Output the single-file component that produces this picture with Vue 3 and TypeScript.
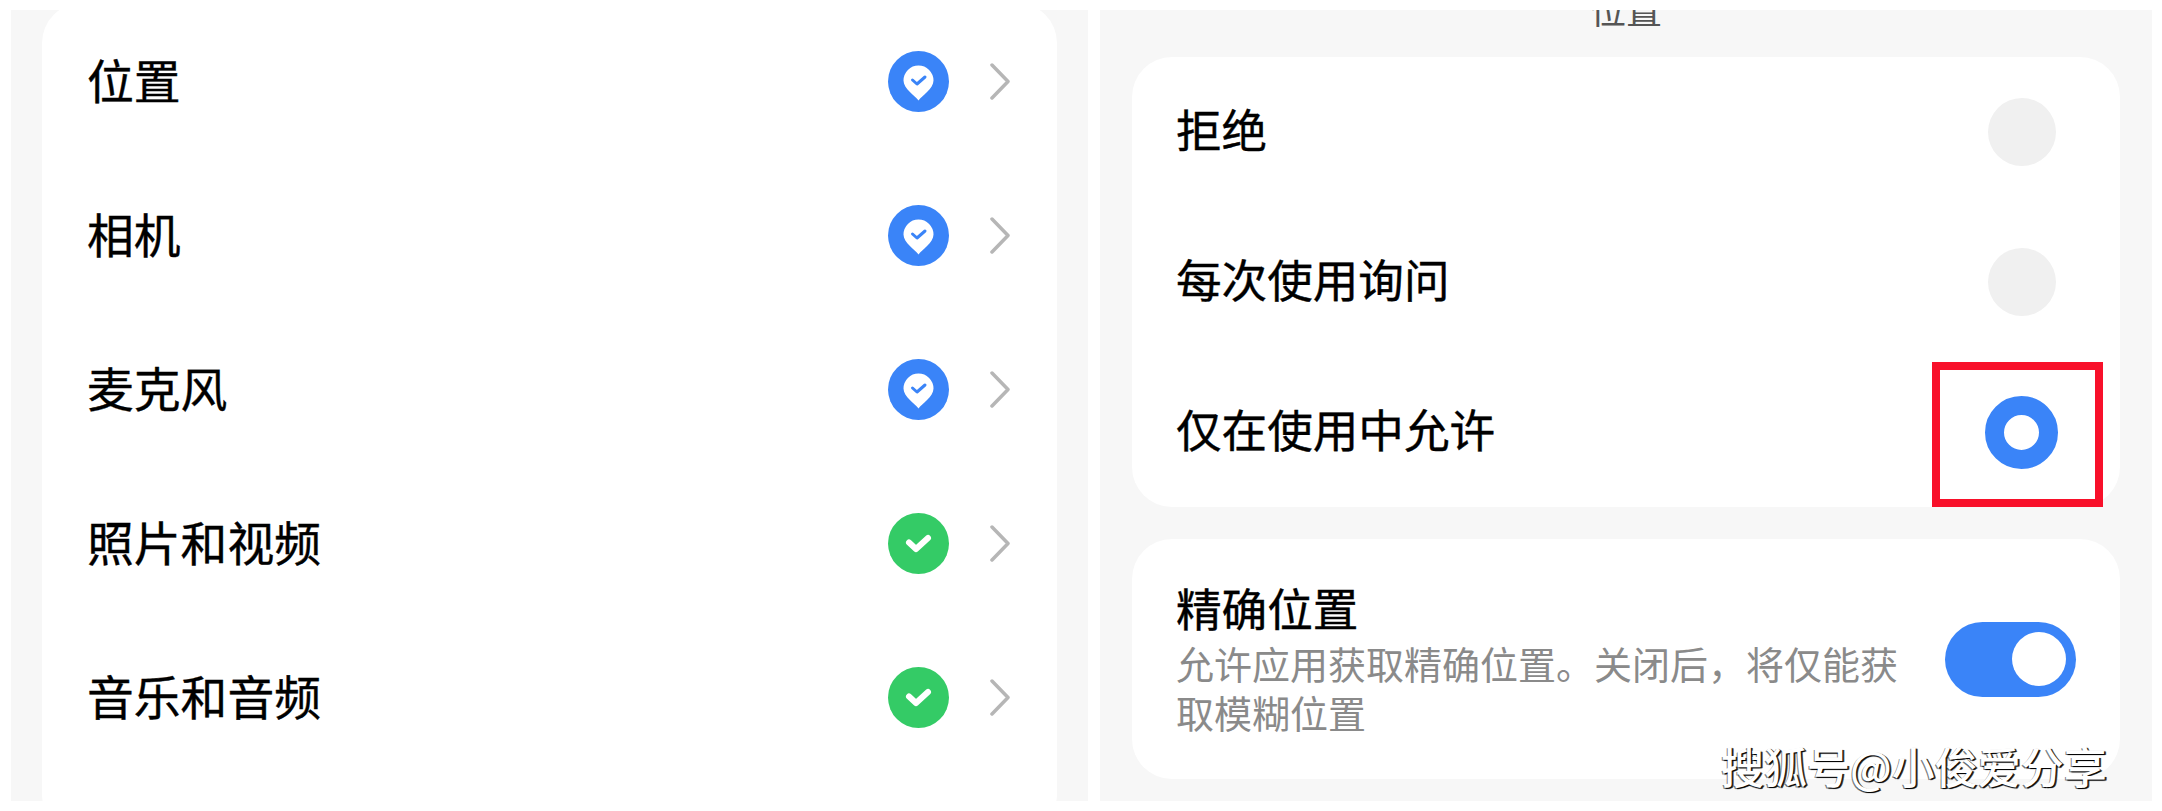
<script setup lang="ts">
type Permission = { name: string; kind: 'location' | 'granted' }
type Choice = { label: string; on: boolean }

const permissions: Permission[] = [
  { name: '位置', kind: 'location' },
  { name: '相机', kind: 'location' },
  { name: '麦克风', kind: 'location' },
  { name: '照片和视频', kind: 'granted' },
  { name: '音乐和音频', kind: 'granted' },
]

const choices: Choice[] = [
  { label: '拒绝', on: false },
  { label: '每次使用询问', on: false },
  { label: '仅在使用中允许', on: true },
]
</script>

<template>
  <div class="page">
    <section class="panel">
      <div class="card list">
        <div v-for="item in permissions" :key="item.name" class="perm-row">
          <span class="label">{{ item.name }}</span>
          <svg class="status" viewBox="0 0 61 61" aria-hidden="true">
            <template v-if="item.kind === 'location'">
              <circle cx="30.5" cy="30.5" r="30.5" fill="#3a84f8" />
              <path d="M30.5 49.5C27 44.5 15.5 38 15.5 29.5a15 15 0 0 1 30 0C45.5 38 34 44.5 30.5 49.5Z" fill="#fff" />
              <path d="M24.5 29l4.5 4 8-7" fill="none" stroke="#3a84f8" stroke-width="3" stroke-linecap="round" stroke-linejoin="round" />
            </template>
            <template v-else>
              <circle cx="30.5" cy="30.5" r="30.5" fill="#34cb66" />
              <path d="M21 29.5l7 6.5 12-11" fill="none" stroke="#fff" stroke-width="6" stroke-linecap="round" stroke-linejoin="round" />
            </template>
          </svg>
          <svg class="chevron" viewBox="0 0 20 37" aria-hidden="true">
            <path d="M2 2l16 16.5L2 35" fill="none" stroke="#b6b6b6" stroke-width="3.5" stroke-linecap="round" stroke-linejoin="round" />
          </svg>
        </div>
      </div>
    </section>

    <section class="panel detail">
      <header class="head"><span class="head-title">位置</span></header>

      <div class="card choices">
        <div v-for="choice in choices" :key="choice.label" class="choice-row">
          <span class="label">{{ choice.label }}</span>
          <span class="radio-slot">
            <span class="radio" :class="{ on: choice.on }"></span>
          </span>
          <span v-if="choice.on" class="mark"></span>
        </div>
      </div>

      <div class="card precise">
        <div class="precise-text">
          <div class="label">精确位置</div>
          <p class="hint">允许应用获取精确位置。关闭后，将仅能获取模糊位置</p>
        </div>
        <span class="toggle"><span class="knob"></span></span>
      </div>
    </section>

    <div class="watermark">搜狐号@小俊爱分享</div>
  </div>
</template>

<style>
html,
body {
  margin: 0;
  background: #fff;
}
</style>

<style scoped>
.page {
  position: relative;
  width: 2162px;
  height: 811px;
  box-sizing: border-box;
  padding: 10px 10px 10px 11px;
  display: flex;
  gap: 12px;
  overflow: hidden;
  background: #fff;
  font-family: "Noto Sans CJK SC", "Noto Sans", sans-serif;
  color: #000;
}

.panel {
  width: 1077px;
  height: 791px;
  padding: 0 31px;
  box-sizing: border-box;
  background: #f7f7f7;
  overflow: hidden;
}

.detail {
  width: 1052px;
  padding: 0 32px;
}

.card {
  background: #fff;
  border-radius: 40px;
}

.list {
  margin-top: -7px;
  padding: 1px 47px 60px 45px;
}

.perm-row {
  height: 154px;
  display: flex;
  align-items: center;
}

.label {
  font-size: 45.6px;
  line-height: 60px;
  -webkit-text-stroke: 0.4px #000;
}

.perm-row .label {
  flex: 1;
  font-size: 46.8px;
  margin-bottom: 5px;
}

.status {
  width: 61px;
  height: 61px;
}

.chevron {
  width: 20px;
  height: 37px;
  margin-left: 41px;
}

.head {
  height: 47px;
  display: flow-root;
  text-align: center;
}

.head-title {
  display: block;
  margin-top: -19px;
  font-size: 36px;
  line-height: 34px;
  color: #555;
}

.choices {
  height: 450px;
  padding: 0 62px 0 44px;
  box-sizing: border-box;
}

.choice-row {
  position: relative;
  height: 150px;
  display: flex;
  align-items: center;
  justify-content: space-between;
}

.choice-row .label {
  margin-bottom: 8px;
}

.radio-slot {
  width: 73px;
  display: flex;
  justify-content: center;
}

.radio {
  width: 68px;
  height: 68px;
  border-radius: 50%;
  background: #f0f0f0;
}

.radio.on {
  width: 35px;
  height: 35px;
  border: 19px solid #3a84f8;
  background: #fff;
}

.mark {
  position: absolute;
  right: -45px;
  bottom: 0;
  width: 171px;
  height: 145px;
  box-sizing: border-box;
  border: 8px solid #f8102a;
}

.precise {
  margin-top: 32px;
  height: 240px;
  padding: 0 44px 0 44px;
  box-sizing: border-box;
  display: flex;
  align-items: center;
  justify-content: space-between;
}

.precise-text {
  width: 735px;
  margin-bottom: 6px;
}

.hint {
  margin: 1px 0 0;
  font-size: 38px;
  line-height: 49px;
  color: #8a8a8a;
}

.toggle {
  width: 131px;
  height: 75px;
  box-sizing: border-box;
  padding: 10px;
  padding-left: 67px;
  border-radius: 38px;
  background: #3a84f8;
  display: flex;
}

.knob {
  width: 54px;
  height: 54px;
  border-radius: 50%;
  background: #fff;
}

.watermark {
  position: absolute;
  left: 1721px;
  top: 738px;
  font-size: 43px;
  line-height: 54px;
  font-weight: 500;
  white-space: nowrap;
  color: #fff;
  text-shadow: 1px 1px 1px #000, 2px 1px 0 rgba(0, 0, 0, 0.7), -1px 1px 0 rgba(0, 0, 0, 0.5);
}
</style>
